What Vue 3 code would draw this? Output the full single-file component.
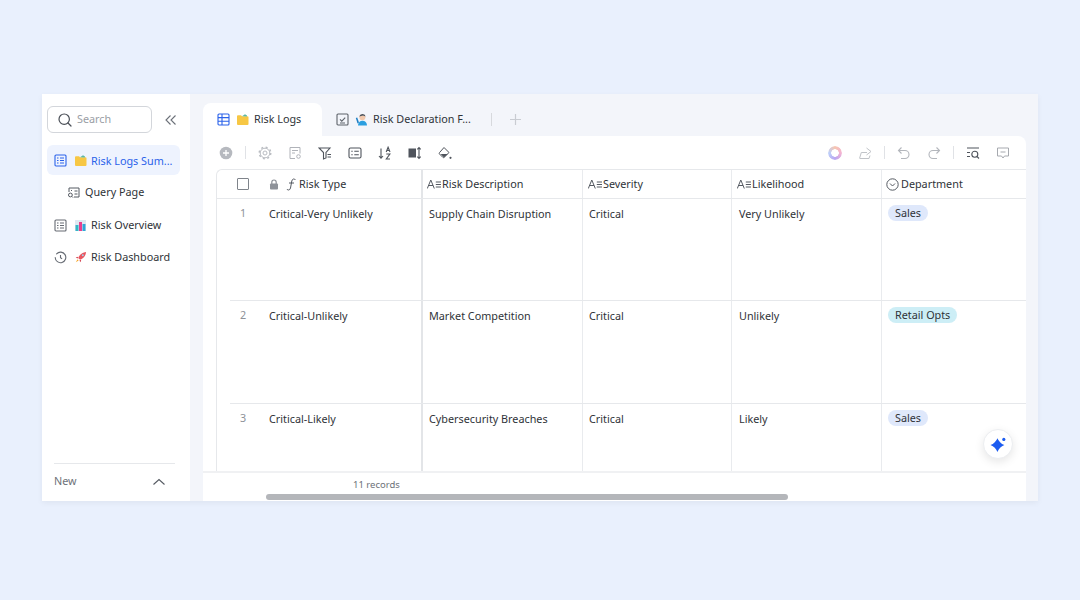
<template>
  <div class="page">
    <div class="window">
      <aside class="sidebar">
        <div class="search-row">
          <div class="search">
            <svg width="16" height="16" viewBox="0 0 16 16" fill="none" stroke="#4a4f57" stroke-width="1.2">
              <circle cx="7.2" cy="7.2" r="5.2" />
              <path d="M11 11l3 3" stroke-linecap="round" />
            </svg>
            <span>Search</span>
          </div>
          <svg class="collapse" width="14" height="14" viewBox="0 0 14 14" fill="none" stroke="#6b7078" stroke-width="1.1">
            <path d="M6.5 2.5L2 7l4.5 4.5M11.5 2.5L7 7l4.5 4.5" />
          </svg>
        </div>

        <nav class="nav">
          <div class="nav-item active">
            <svg width="13" height="13" viewBox="0 0 13 13" fill="none" stroke="#2a62ea" stroke-width="1.1">
              <rect x="1" y="1" width="11" height="11" rx="1" />
              <path d="M3 4h1.5M6 4h4M3 6.5h1.5M6 6.5h4M3 9h1.5M6 9h4" />
            </svg>
            <svg class="emoji" width="13" height="13" viewBox="0 0 13 13">
              <path d="M1 3.2q0-1 1-1h3l1 1h5.5q1 0 1 1V11q0 1-1 1H2q-1 0-1-1z" fill="#f7c744" />
              <path d="M6 3.2l3-2 2 1.4v1z" fill="#5cb8a5" />
            </svg>
            <span>Risk Logs Sum...</span>
          </div>
          <div class="nav-item sub">
            <svg width="13" height="13" viewBox="0 0 13 13" fill="none" stroke="#555a62" stroke-width="1">
              <path d="M2 6V2h10v9H7" />
              <circle cx="3.4" cy="9" r="1.9" />
              <path d="M4.8 10.4l1.2 1.2M7.5 5h3M7.5 8h3M4 4.5h1" />
            </svg>
            <span>Query Page</span>
          </div>
          <div class="nav-item spaced">
            <svg width="13" height="13" viewBox="0 0 13 13" fill="none" stroke="#666b73" stroke-width="1.1">
              <rect x="1" y="1" width="11" height="11" rx="1" />
              <path d="M3 4h1.5M6 4h4M3 6.5h1.5M6 6.5h4M3 9h1.5M6 9h4" />
            </svg>
            <svg class="emoji" width="13" height="13" viewBox="0 0 13 13">
              <rect x="1" y="1" width="11" height="11" fill="#dfe9f2" />
              <rect x="1.5" y="6" width="3" height="6" fill="#35b5c6" />
              <rect x="5" y="3" width="3" height="9" fill="#e93f8e" />
              <rect x="8.5" y="5" width="3" height="7" fill="#2fa6d8" />
            </svg>
            <span>Risk Overview</span>
          </div>
          <div class="nav-item">
            <svg width="13" height="13" viewBox="0 0 13 13" fill="none" stroke="#666b73" stroke-width="1.1">
              <path d="M2.6 2.8A5.3 5.3 0 1 1 1.2 6.5" stroke-linecap="round" />
              <path d="M6.5 4v2.8l1.6 1" />
            </svg>
            <svg class="emoji" width="13" height="13" viewBox="0 0 14 14">
              <path d="M4.5 7.5C6 3.8 9 1.5 13 1c-.4 4-2.7 7-6.400 8.500z" fill="#e9555f" />
              <path d="M4.5 6.2L1.8 7l2 1.2zM7.8 9.5L7 12.2l-1.2-2z" fill="#d13a48" />
              <circle cx="9.5" cy="4.5" r="1.1" fill="#9fd4ee" />
              <path d="M3.8 9l1.2 1.2L2 12.2z" fill="#f5a623" />
            </svg>
            <span>Risk Dashboard</span>
          </div>
        </nav>

        <div class="side-foot">
          <span>New</span>
          <svg width="14" height="14" viewBox="0 0 14 14" fill="none" stroke="#555a62" stroke-width="1.1">
            <path d="M1.5 9.5L7 4.5l5.5 5" />
          </svg>
        </div>
      </aside>

      <main class="main">
        <div class="tabs">
          <div class="tab current">
            <svg width="13" height="13" viewBox="0 0 13 13" fill="none" stroke="#2a62ea" stroke-width="1.1">
              <rect x="1" y="1" width="11" height="11" rx="1" />
              <path d="M1 4.6h11M1 8.2h11M5 1v11" />
            </svg>
            <svg class="emoji" width="13" height="13" viewBox="0 0 13 13">
              <path d="M1 3.2q0-1 1-1h3l1 1h5.5q1 0 1 1V11q0 1-1 1H2q-1 0-1-1z" fill="#f7c744" />
              <path d="M6 3.2l3-2 2 1.4v1z" fill="#5cb8a5" />
            </svg>
            <span>Risk Logs</span>
          </div>
          <div class="tab">
            <svg width="13" height="13" viewBox="0 0 13 13" fill="none" stroke="#5d6269" stroke-width="1.1">
              <rect x="1" y="1" width="11" height="11" rx="1" />
              <path d="M4 6.3l1.8 1.8L9.2 4.6M4 10h5" />
            </svg>
            <svg class="emoji" width="13" height="13" viewBox="0 0 13 13">
              <circle cx="7.4" cy="4.2" r="3" fill="#f2c9ad" />
              <path d="M4.2 3.6Q5 .8 7.6.9q2.7.1 3 2.6L8 2.6z" fill="#4a5560" />
              <path d="M3 12.5c0-3 2-4.8 4.5-4.8s4.5 1.8 4.5 4.8z" fill="#2b9fe0" />
              <path d="M.8 5l1.4-.4L4 9.5 2.5 10.5z" fill="#1f7fc4" />
            </svg>
            <span class="tab-name">Risk Declaration F...</span>
          </div>
          <i class="tab-sep"></i>
          <svg class="tab-add" width="13" height="13" viewBox="0 0 13 13" stroke="#c9ccd2" stroke-width="1.2">
            <path d="M6.5 1v11M1 6.5h11" />
          </svg>
        </div>

        <section class="sheet">
          <div class="toolbar">
            <svg width="14" height="14" viewBox="0 0 14 14">
              <circle cx="7" cy="7" r="6.3" fill="#b6b9bf" />
              <path d="M7 4v6M4 7h6" stroke="#fff" stroke-width="1.3" />
            </svg>
            <i class="bar-sep first"></i>
            <svg class="tool" width="14" height="14" viewBox="0 0 14 14" fill="none" stroke="#b9bcc2">
              <circle cx="7" cy="7" r="4.8" stroke-width="1" />
              <circle cx="7" cy="7" r="5.8" stroke-width="1.4" stroke-dasharray="2 2.55" />
              <circle cx="7" cy="7" r="2" stroke-width="1" />
            </svg>
            <svg class="tool" width="14" height="14" viewBox="0 0 14 14" fill="none" stroke="#b0b3b9" stroke-width="1">
              <path d="M7 12.5H2v-11h10v6M4 4.5h6M4 7h3" />
              <circle cx="10.5" cy="10.5" r="1.8" />
            </svg>
            <svg class="tool" width="14" height="14" viewBox="0 0 14 14" fill="none" stroke="#4f545c" stroke-width="1.1">
              <path d="M1 2h11L8 6.5V12l-2.5 1V6.500zM9.500 8.500H13M9.500 11H13" />
            </svg>
            <svg class="tool" width="14" height="14" viewBox="0 0 14 14" fill="none" stroke="#4f545c" stroke-width="1.1">
              <rect x="1" y="2" width="12" height="10" rx="1.5" />
              <path d="M3.3 5.2h1.4M6.3 5.2h4.500M3.3 8.800h1.400M6.300 8.800h4.500" />
            </svg>
            <svg class="tool" width="14" height="14" viewBox="0 0 14 14" fill="none" stroke="#4f545c" stroke-width="1.1">
              <path d="M3 2.500V12M1 10l2 2.200L5 10M8.200 6l1.900-4.800L12 6M8.800 4.500h2.600M8.300 8h3.600l-3.600 5h3.700" />
            </svg>
            <svg class="tool" width="14" height="14" viewBox="0 0 14 14" fill="none" stroke="#4f545c" stroke-width="1.1">
              <rect x=".5" y="2.5" width="7.5" height="9" fill="#4f545c" stroke="none" />
              <path d="M11 1.500v11M9.300 3.300L11 1.500l1.700 1.800M9.300 10.700l1.700 1.800 1.700-1.800" />
            </svg>
            <svg class="tool" width="14" height="14" viewBox="0 0 14 14" fill="none" stroke="#4f545c" stroke-width="1">
              <path d="M6 1.500l5 5-4.800 4.800a1 1 0 0 1-1.400 0L1.500 8a1 1 0 0 1 0-1.400z" />
              <path d="M2.600 8h7.200l-3.300 3q-.5.400-1 0z" fill="#4f545c" stroke="none" />
              <circle cx="12.500" cy="11.800" r="1.100" fill="#4f545c" stroke="none" />
            </svg>

            <span class="spacer"></span>

            <span class="ring"></span>
            <svg class="tool-r" width="14" height="14" viewBox="0 0 14 14" fill="none" stroke="#c0c3c8" stroke-width="1">
              <path d="M1.500 12.500L3.300 6.500H9M8.500 2l4.500 3.500-4.500 3.500M2 12.500h9l1-3" />
            </svg>
            <i class="bar-sep"></i>
            <svg width="14" height="14" viewBox="0 0 14 14" fill="none" stroke="#b3b6bc" stroke-width="1.1">
              <path d="M4.500 1.500L1.500 4.500l3 3M1.500 4.500H8a4 4 0 0 1 0 8H4" />
            </svg>
            <svg class="tool-r" width="14" height="14" viewBox="0 0 14 14" fill="none" stroke="#b3b6bc" stroke-width="1.1">
              <path d="M9.500 1.500l3 3-3 3M12.500 4.500H6a4 4 0 0 0 0 8h4" />
            </svg>
            <i class="bar-sep"></i>
            <svg width="14" height="14" viewBox="0 0 14 14" fill="none" stroke="#4f545c" stroke-width="1.1">
              <path d="M1 2h12M1 6.500h3M1 10.500h3" />
              <circle cx="8.800" cy="8.300" r="3" />
              <path d="M11 10.500l2 2" />
            </svg>
            <svg class="tool-r" width="14" height="14" viewBox="0 0 14 14" fill="none" stroke="#a6a9af" stroke-width="1">
              <path d="M1.500 2h11v8H8.500L7 12l-1.500-2h-4zM4.500 6h5" />
            </svg>
          </div>

          <div class="grid">
            <div class="grid-head">
              <div class="head-check">
                <i class="checkbox"></i>
              </div>
              <div class="cell-type head-first">
                <svg class="lock" width="10" height="11" viewBox="0 0 10 11">
                  <rect x="1" y="4.500" width="8" height="6" rx="1" fill="#8e9299" />
                  <path d="M2.800 5V3.200a2.200 2.200 0 0 1 4.400 0V5" fill="none" stroke="#8e9299" stroke-width="1.2" />
                </svg>
                <svg width="11" height="13" viewBox="0 0 11 13" fill="none" stroke="#555a62" stroke-width="1">
                  <path d="M9.500 2Q8.800.8 7.500 1 6.200 1.300 5.800 3L4.500 10Q4 12 2.500 12 1.300 12 1 11M3 5h5" />
                </svg>
                <span>Risk Type</span>
              </div>
              <div class="cell-desc">
                <svg width="14" height="12" viewBox="0 0 14 12" fill="none" stroke="#555a62" stroke-width="1">
                  <path d="M.3 10.500L3.800 2l3.500 8.500M1.500 7.500h4.600M8.800 4H14M8.800 6.500H14M8.800 9H14" />
                </svg>
                <span>Risk Description</span>
              </div>
              <div class="cell-sev">
                <svg width="14" height="12" viewBox="0 0 14 12" fill="none" stroke="#555a62" stroke-width="1">
                  <path d="M.3 10.500L3.800 2l3.500 8.500M1.500 7.500h4.600M8.800 4H14M8.800 6.500H14M8.800 9H14" />
                </svg>
                <span>Severity</span>
              </div>
              <div class="cell-like">
                <svg width="14" height="12" viewBox="0 0 14 12" fill="none" stroke="#555a62" stroke-width="1">
                  <path d="M.3 10.500L3.800 2l3.500 8.500M1.500 7.500h4.600M8.800 4H14M8.800 6.500H14M8.800 9H14" />
                </svg>
                <span>Likelihood</span>
              </div>
              <div class="cell-dept">
                <svg width="13" height="13" viewBox="0 0 13 13" fill="none" stroke="#555a62" stroke-width="1">
                  <circle cx="6.5" cy="6.5" r="5.7" />
                  <path d="M4 5.500l2.500 2.500L9 5.500" />
                </svg>
                <span>Department</span>
              </div>
            </div>

            <div v-for="row in rows" :key="row.id" class="grid-row" :class="'row-' + row.id">
              <div class="row-num">{{ row.id }}</div>
              <div class="cell-type body-cell">{{ row.type }}</div>
              <div class="cell-desc body-cell">{{ row.desc }}</div>
              <div class="cell-sev body-cell">{{ row.severity }}</div>
              <div class="cell-like body-cell">{{ row.likelihood }}</div>
              <div class="cell-dept body-cell tag-cell">
                <span class="tag" :class="row.tagClass">{{ row.dept }}</span>
              </div>
            </div>
          </div>

          <div class="foot">
            <div class="records">11 records</div>
            <div class="scroll-track"><div class="scroll-thumb"></div></div>
          </div>

          <button class="ai-btn" aria-label="AI">
            <svg width="17" height="17" viewBox="0 0 16 16" fill="#1c5cf0">
              <path d="M7 2Q8.800 6.500 13.500 8.500 8.800 10.500 7 15 5.200 10.500.5 8.500 5.200 6.500 7 2z" />
              <circle cx="13" cy="3.200" r="1.500" />
            </svg>
          </button>
        </section>
      </main>
    </div>
  </div>
</template>

<script setup>
const rows = [
  { id: 1, type: 'Critical-Very Unlikely', desc: 'Supply Chain Disruption', severity: 'Critical', likelihood: 'Very Unlikely', dept: 'Sales', tagClass: 'blue' },
  { id: 2, type: 'Critical-Unlikely', desc: 'Market Competition', severity: 'Critical', likelihood: 'Unlikely', dept: 'Retail Opts', tagClass: 'cyan' },
  { id: 3, type: 'Critical-Likely', desc: 'Cybersecurity Breaches', severity: 'Critical', likelihood: 'Likely', dept: 'Sales', tagClass: 'blue' },
]
</script>

<style>
html,
body {
  margin: 0;
  background: #e9f0fd;
}
</style>

<style scoped>
.page {
  width: 1080px;
  height: 600px;
  box-sizing: border-box;
  padding: 94px 42px 99px;
  background: #e9f0fd;
  font-family: 'Noto Sans', sans-serif;
  font-size: 10.8px;
  color: #2f3338;
  overflow: hidden;
}

svg {
  flex: none;
}

/* text sits a px high of the icons in the reference */
.search span,
.nav-item:not(.active) span,
.tab span,
.side-foot span,
.grid-head span {
  margin-bottom: 2px;
}

.window {
  display: flex;
  height: 100%;
  background: #f3f5fa;
  box-shadow: 0 2px 6px #0000000d;
}

.sidebar {
  width: 148px;
  background: #fff;
  display: flex;
  flex-direction: column;
  flex: none;
}

.search-row {
  display: flex;
  align-items: center;
  padding: 12px 0 0 5px;
}

.search {
  width: 105px;
  height: 27px;
  box-sizing: border-box;
  border: 1px solid #d3d6db;
  border-radius: 6px;
  display: flex;
  align-items: center;
  gap: 4px;
  padding-left: 9px;
  color: #9a9ea5;
}

.collapse {
  margin-left: 12px;
}

.nav {
  margin-top: 12px;
  padding: 0 10px 0 5px;
  display: flex;
  flex-direction: column;
  gap: 2px;
}

.nav-item {
  height: 30px;
  display: flex;
  align-items: center;
  gap: 7px;
  padding-left: 7px;
  border-radius: 6px;
  white-space: nowrap;
}

.nav-item.active {
  background: #eef3fe;
  color: #2a62ea;
}

.nav-item.sub {
  padding-left: 20px;
  gap: 5px;
}

.nav-item.spaced {
  margin-top: 1px;
}

.nav-item .emoji {
  margin-right: -3px;
}

.side-foot {
  margin: auto 15px 0 12px;
  height: 38px;
  box-sizing: border-box;
  padding: 0 9px 2px 0;
  border-top: 1px solid #e6e8eb;
  display: flex;
  align-items: center;
  justify-content: space-between;
  color: #6d7178;
}

.main {
  flex: 1;
  min-width: 0;
  padding: 9px 12px 0 13px;
  display: flex;
  flex-direction: column;
}

.tabs {
  height: 33px;
  display: flex;
  align-items: center;
  flex: none;
}

.tab {
  height: 33px;
  display: flex;
  align-items: center;
  gap: 6px;
  padding: 0 14px;
  white-space: nowrap;
}

.tab .emoji {
  margin-right: -1px;
}

.tab-name {
  width: 101px;
}

.tab.current {
  width: 119px;
  box-sizing: border-box;
  background: #fff;
  border-radius: 8px 8px 0 0;
}

.tab-sep {
  width: 1px;
  height: 13px;
  background: #d7d9dd;
  margin-left: 3px;
}

.tab-add {
  margin-left: 17px;
}

.sheet {
  position: relative;
  flex: 1;
  min-height: 0;
  background: #fff;
  border-radius: 0 8px 0 0;
  display: flex;
  flex-direction: column;
}

.toolbar {
  height: 33px;
  flex: none;
  display: flex;
  align-items: center;
  padding: 0 16px;
  box-sizing: border-box;
}

.bar-sep {
  width: 1px;
  height: 13px;
  background: #e0e2e6;
  margin: 0 12px;
}

.tool {
  margin-right: 16px;
}

.tool-r {
  margin-left: 16px;
}

.spacer {
  flex: 1;
}

.ring {
  width: 14px;
  height: 14px;
  border-radius: 50%;
  background: conic-gradient(#f7c6b0, #f4b3d2, #b9a6f2, #bcd0fa, #f7c6b0);
  -webkit-mask: radial-gradient(circle, transparent 3.5px, #000 4px);
  mask: radial-gradient(circle, transparent 3.5px, #000 4px);
}

.grid {
  flex: 1;
  min-height: 0;
  margin-left: 13px;
  border-left: 1px solid #e6e8eb;
  border-top: 1px solid #e6e8eb;
  border-top-left-radius: 6px;
  overflow: hidden;
}

.grid-head,
.grid-row {
  display: flex;
}

.grid-head {
  height: 28px;
  border-bottom: 1px solid #e6e8eb;
  align-items: stretch;
}

.grid-head > div {
  display: flex;
  align-items: center;
  gap: 2px;
}

.head-check,
.row-num {
  width: 52px;
  flex: none;
  box-sizing: border-box;
}

.head-check {
  padding-left: 20px;
}

.checkbox {
  display: block;
  width: 10px;
  height: 10px;
  border: 1px solid #7f848b;
  border-radius: 1px;
}

.cell-type {
  width: 154px;
  flex: none;
  box-sizing: border-box;
  border-right: 2px solid #e3e5e8;
}

.head-first .lock {
  margin-right: 5px;
}

.cell-desc,
.cell-sev,
.cell-like,
.cell-dept {
  flex: none;
  box-sizing: border-box;
  padding-left: 5px;
  border-right: 1px solid #e9ebee;
}

.grid-head > .cell-desc,
.grid-head > .cell-dept {
  padding-left: 4px;
}

.grid-head > .cell-desc,
.grid-head > .cell-sev,
.grid-head > .cell-like {
  gap: 1px;
}

.cell-desc {
  width: 160px;
}

.cell-sev {
  width: 149px;
}

.cell-like {
  width: 150px;
}

.cell-dept {
  flex: 1;
  border-right: 0;
}

.grid-row {
  position: relative;
  margin-left: 13px;
}

.row-1 {
  height: 101px;
  border-bottom: 1px solid #e6e8eb;
}

.row-2 {
  height: 102px;
  border-bottom: 1px solid #e6e8eb;
}

.row-3 {
  height: 67px;
}

.row-num {
  width: 39px;
  padding-left: 10px;
  padding-top: 7px;
  color: #8e9299;
  line-height: 14px;
}

.body-cell {
  padding-top: 6px;
  line-height: 18px;
}

.cell-desc.body-cell,
.cell-sev.body-cell {
  padding-left: 6px;
}

.cell-like.body-cell {
  padding-left: 7px;
}

.tag-cell {
  padding-left: 6px;
  padding-top: 5px;
}

.tag {
  display: inline-block;
  height: 16px;
  line-height: 15px;
  padding: 0 7px;
  border-radius: 8px;
}

.tag.blue {
  background: #dfe8fb;
}

.tag.cyan {
  background: #cdeef6;
}

.foot {
  flex: none;
  height: 30px;
  border-top: 2px solid #f0f1f3;
  box-sizing: border-box;
  display: flex;
  flex-direction: column;
  color: #6d7178;
  font-size: 9.5px;
}

.records {
  padding: 5px 0 0 150px;
  line-height: 13px;
}

.scroll-track {
  margin-top: 3px;
  padding-left: 63px;
}

.scroll-thumb {
  width: 522px;
  height: 6px;
  background: #b4b6ba;
  border-radius: 3px;
}

.ai-btn {
  position: absolute;
  right: 13px;
  bottom: 42px;
  width: 30px;
  height: 30px;
  padding: 0;
  border: 1px solid #eceef1;
  border-radius: 50%;
  background: #fff;
  box-shadow: 0 3px 10px #0000001a;
  display: flex;
  align-items: center;
  justify-content: center;
}
</style>
